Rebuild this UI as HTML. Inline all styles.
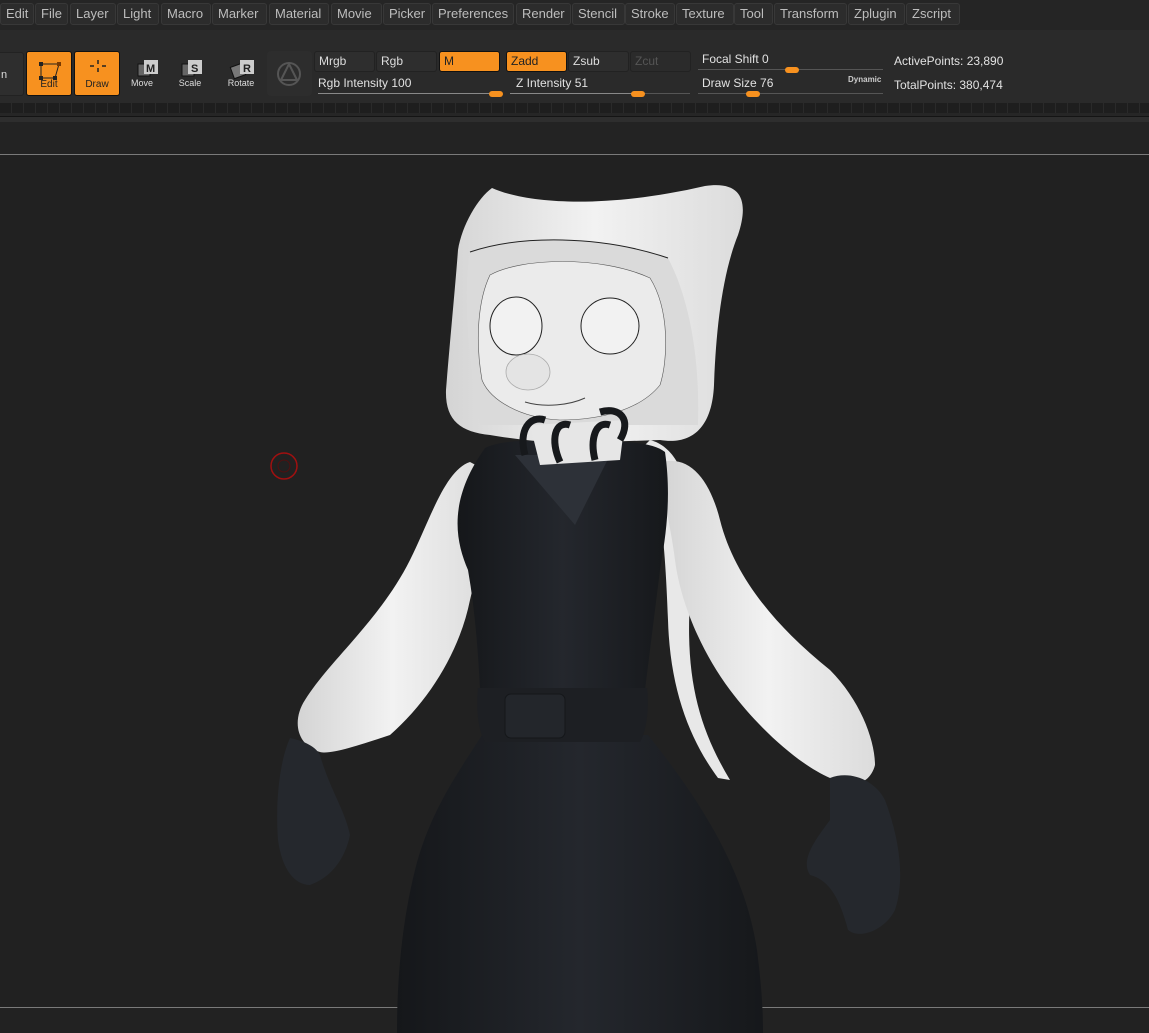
<!DOCTYPE html>
<html><head><meta charset="utf-8"><style>
*{margin:0;padding:0;box-sizing:border-box}
body{width:1149px;height:1033px;overflow:hidden;background:#222;font-family:"Liberation Sans","DejaVu Sans",sans-serif;position:relative;color:#d8d8d8}
.abs{position:absolute}
#menu{left:0;top:0;width:1149px;height:30px;background:#252525}
.mi{position:absolute;top:3px;height:22px;background:#2c2c2c;border:1px solid #383838;border-radius:3px;font-size:13px;color:#bdbdbd;line-height:20px;padding-left:5px}
#tb{left:0;top:30px;width:1149px;height:73px;background:#2a2a2a}
.btn{position:absolute;border-radius:3px;font-size:12px}
.or{background:#f7911f;border:1px solid #111;color:#222}
.gb{background:#2e2e2e;border:1px solid #222;color:#ddd;line-height:18px;padding-left:4px}
.lbl{position:absolute;font-size:12px;color:#e2e2e2}
.track{position:absolute;height:1px;background:#555}
.knob{position:absolute;width:14px;height:6px;border-radius:3px;background:#f7911f}
.ic{position:absolute;font-size:9px;color:#ddd;text-align:center;width:40px}
</style></head><body>
<div id="menu" class="abs">
<div class="mi" style="left:0;width:34px">Edit</div>
<div class="mi" style="left:35px;width:33px">File</div>
<div class="mi" style="left:70px;width:46px">Layer</div>
<div class="mi" style="left:117px;width:42px">Light</div>
<div class="mi" style="left:161px;width:50px">Macro</div>
<div class="mi" style="left:212px;width:55px">Marker</div>
<div class="mi" style="left:269px;width:60px">Material</div>
<div class="mi" style="left:331px;width:51px">Movie</div>
<div class="mi" style="left:383px;width:48px">Picker</div>
<div class="mi" style="left:432px;width:82px">Preferences</div>
<div class="mi" style="left:516px;width:55px">Render</div>
<div class="mi" style="left:572px;width:53px">Stencil</div>
<div class="mi" style="left:625px;width:50px">Stroke</div>
<div class="mi" style="left:676px;width:58px">Texture</div>
<div class="mi" style="left:734px;width:39px">Tool</div>
<div class="mi" style="left:774px;width:73px">Transform</div>
<div class="mi" style="left:848px;width:57px">Zplugin</div>
<div class="mi" style="left:906px;width:54px">Zscript</div>
</div>
<div id="tb" class="abs">
<div class="btn gb" style="left:-4px;top:22px;width:28px;height:44px;line-height:44px;font-size:11px">n</div>
<div class="btn or" style="left:26px;top:21px;width:46px;height:45px"><svg width="46" height="30" style="position:absolute;left:0;top:4px"><path d="M14 8 L32 8 L28 22 L14 22 Z" stroke="#222" fill="none"/><rect x="12" y="6" width="4" height="4" fill="#222"/><rect x="30" y="6" width="4" height="4" fill="#7a3a00"/><rect x="12" y="20" width="4" height="4" fill="#222"/><rect x="26" y="20" width="4" height="4" fill="#222"/></svg><div style="position:absolute;top:27px;width:100%;text-align:center;font-size:10px">Edit</div></div>
<div class="btn or" style="left:74px;top:21px;width:46px;height:45px"><svg width="46" height="30" style="position:absolute;left:0;top:4px"><path d="M23 4v4M23 12v4M15 10h4M27 10h4" stroke="#222" stroke-width="1.5"/></svg><div style="position:absolute;top:27px;width:100%;text-align:center;font-size:10px">Draw</div></div>
<svg class="abs" style="left:130px;top:28px" width="140" height="24">
<rect x="8" y="6" width="12" height="12" fill="#666" stroke="#111"/><rect x="14" y="2" width="14" height="14" fill="#ccc"/><text x="16" y="14" font-size="11" font-weight="bold" fill="#222" font-family="Liberation Sans">M</text>
<rect x="52" y="6" width="12" height="12" fill="#666" stroke="#111"/><rect x="58" y="2" width="14" height="14" fill="#ccc"/><text x="61" y="14" font-size="11" font-weight="bold" fill="#222" font-family="Liberation Sans">S</text>
<rect x="102" y="7" width="12" height="12" fill="#777" stroke="#111" transform="rotate(-20 108 13)"/><rect x="110" y="2" width="14" height="14" fill="#ccc"/><text x="113" y="14" font-size="11" font-weight="bold" fill="#222" font-family="Liberation Sans">R</text>
</svg>
<div class="ic" style="left:122px;top:48px">Move</div>
<div class="ic" style="left:170px;top:48px">Scale</div>
<div class="ic" style="left:221px;top:48px">Rotate</div>
<div class="abs" style="left:267px;top:21px;width:45px;height:45px;background:#2d2d2d;border-radius:4px"><svg width="45" height="45"><circle cx="22" cy="23" r="11" stroke="#555" stroke-width="2" fill="none"/><path d="M22 13 L14 29 L30 29 Z" stroke="#555" stroke-width="2" fill="none" stroke-linejoin="round"/></svg></div>
<div class="btn gb" style="left:314px;top:21px;width:61px;height:21px">Mrgb</div>
<div class="btn gb" style="left:376px;top:21px;width:61px;height:21px">Rgb</div>
<div class="btn or" style="left:439px;top:21px;width:61px;height:21px;line-height:18px;padding-left:4px">M</div>
<div class="btn or" style="left:506px;top:21px;width:61px;height:21px;line-height:18px;padding-left:4px">Zadd</div>
<div class="btn gb" style="left:568px;top:21px;width:61px;height:21px">Zsub</div>
<div class="btn gb" style="left:630px;top:21px;width:61px;height:21px;color:#555;background:#2b2b2b">Zcut</div>
<div class="lbl" style="left:318px;top:46px">Rgb Intensity 100</div>
<div class="track" style="left:318px;top:63px;width:180px;background:#888"></div><div class="knob" style="left:489px;top:61px"></div>
<div class="lbl" style="left:516px;top:46px">Z Intensity 51</div>
<div class="track" style="left:510px;top:63px;width:180px"></div><div class="track" style="left:510px;top:63px;width:125px;background:#888"></div><div class="knob" style="left:631px;top:61px"></div>
<div class="lbl" style="left:702px;top:22px">Focal Shift 0</div>
<div class="track" style="left:698px;top:39px;width:185px"></div><div class="knob" style="left:785px;top:37px"></div>
<div class="lbl" style="left:702px;top:46px">Draw Size 76</div>
<div class="abs" style="left:848px;top:45px;font-size:8px;font-weight:bold;color:#ccc">Dynamic</div>
<div class="track" style="left:698px;top:63px;width:185px"></div><div class="knob" style="left:746px;top:61px"></div>
<div class="lbl" style="left:894px;top:24px">ActivePoints: 23,890</div>
<div class="lbl" style="left:894px;top:48px">TotalPoints: 380,474</div>
</div>
<div class="abs" style="left:0;top:103px;width:1149px;height:10px;background:repeating-linear-gradient(90deg,#1e1e1e 0 11px,#2a2a2a 11px 12px)"></div>
<div class="abs" style="left:0;top:113px;width:1149px;height:4px;background:#262626"></div>
<div class="abs" style="left:0;top:116px;width:1149px;height:1px;background:#141414"></div>
<div class="abs" style="left:0;top:117px;width:1149px;height:5px;background:#2e2e2e"></div>
<div class="abs" style="left:0;top:122px;width:1149px;height:32px;background:#232323"></div>
<div class="abs" style="left:0;top:154px;width:1149px;height:1px;background:#7a7a7a"></div>
<div class="abs" style="left:0;top:155px;width:1149px;height:852px;background:#212121"></div>
<div class="abs" style="left:0;top:1007px;width:1149px;height:1px;background:#7a7a7a"></div>
<div class="abs" style="left:0;top:1008px;width:1149px;height:25px;background:#222"></div>
<svg class="abs" style="left:0;top:0" width="1149" height="1033">
<defs>
<linearGradient id="w" x1="0" x2="1"><stop offset="0" stop-color="#d4d4d4"/><stop offset=".5" stop-color="#f2f2f2"/><stop offset="1" stop-color="#dcdcdc"/></linearGradient>
<linearGradient id="d" x1="0" x2="1"><stop offset="0" stop-color="#15171a"/><stop offset=".5" stop-color="#24272d"/><stop offset="1" stop-color="#16181b"/></linearGradient>
</defs>
<circle cx="284" cy="466" r="13" stroke="#a01010" stroke-width="1.5" fill="none"/>
<circle cx="284" cy="466" r="6" stroke="#501010" stroke-width="1" fill="none"/>
<path d="M650 440 C690 450 700 520 690 600 C685 680 700 730 730 780 L718 778 C690 740 670 690 668 620 C665 540 660 480 640 450 Z" fill="#e8e8e8"/>
<path d="M470 462 C445 470 430 520 410 560 C380 620 330 660 305 700 C292 720 296 745 320 752 C330 755 360 745 390 735 C430 700 460 650 470 600 C480 560 490 500 485 470 Z" fill="url(#w)"/>
<path d="M662 462 C690 455 710 480 720 520 C735 580 780 630 830 670 C860 700 875 740 875 765 C870 785 850 790 830 778 C800 765 760 730 730 690 C700 650 680 600 675 560 C670 520 660 490 662 462 Z" fill="url(#w)"/>
<path d="M290 738 C280 760 275 800 278 840 C282 870 295 885 310 885 C330 878 345 860 350 835 C345 810 330 790 320 755 C315 745 300 740 290 738 Z" fill="#25282d"/>
<path d="M830 778 C850 770 875 780 885 800 C900 840 905 880 895 910 C885 930 860 940 848 930 C840 900 830 880 810 875 C800 860 815 840 830 820 Z" fill="#25282d"/>
<path d="M482 735 L648 735 C700 800 745 870 757 950 C762 990 763 1010 763 1033 L397 1033 C397 990 400 930 415 870 C430 810 460 770 482 735 Z" fill="url(#d)"/>
<path d="M485 448 C500 440 540 438 570 445 C610 440 650 440 665 452 C672 500 665 540 660 570 C655 610 650 650 645 690 L480 690 C478 650 475 610 468 570 C455 540 448 500 485 448 Z" fill="url(#d)"/>
<path d="M515 455 L610 455 L575 525 Z" fill="#2d3138"/>
<path d="M478 688 L647 688 C650 710 645 735 640 742 L485 742 C478 730 476 710 478 688 Z" fill="#1d1f23"/>
<rect x="505" y="694" width="60" height="44" rx="6" fill="#23262b" stroke="#15171a"/>
<!-- hood -->
<path d="M492 188 C530 205 610 208 705 186 C745 180 748 205 738 235 C722 275 716 330 714 385 C712 430 690 445 660 440 L600 442 C560 445 520 440 490 435 C460 432 445 420 446 390 C450 340 455 290 458 250 C462 225 478 198 492 188 Z" fill="url(#w)"/>
<path d="M470 252 C520 235 600 235 668 258 C690 300 700 360 698 425 L480 425 C470 370 462 300 470 252 Z" fill="#dadada"/>
<path d="M470 252 C520 235 600 235 668 258" stroke="#222" fill="none" stroke-width="1"/>
<!-- face -->
<path d="M490 275 C520 258 600 255 650 278 C670 310 668 360 660 385 C640 410 600 420 560 420 C520 418 490 400 482 380 C475 340 478 300 490 275 Z" fill="#ebebeb" stroke="#555" stroke-width="0.6"/>
<ellipse cx="516" cy="326" rx="26" ry="29" fill="#f2f2f2" stroke="#222" stroke-width="1"/>
<ellipse cx="610" cy="326" rx="29" ry="28" fill="#f2f2f2" stroke="#222" stroke-width="1"/>
<ellipse cx="528" cy="372" rx="22" ry="18" fill="#e4e4e4" stroke="#aaa" stroke-width="0.8"/>
<path d="M525 402 C545 408 570 405 585 398" stroke="#444" fill="none"/>
<!-- neck + collar -->
<path d="M530 425 L625 420 L620 460 L540 465 Z" fill="#e6e6e6"/>
<g fill="none" stroke="#17191c" stroke-width="7">
<path d="M525 455 C518 430 530 415 545 420"/>
<path d="M560 462 C550 440 555 420 570 425"/>
<path d="M595 460 C590 440 595 420 610 425"/>
<path d="M620 440 C632 420 620 406 600 412"/>
</g>
</svg>
</body></html>
